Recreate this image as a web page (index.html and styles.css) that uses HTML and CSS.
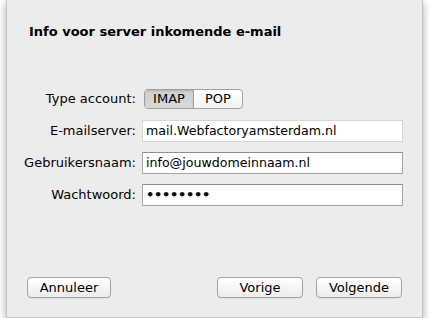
FILE: index.html
```html
<!DOCTYPE html>
<html>
<head>
<meta charset="utf-8">
<link rel="stylesheet" href="styles.css">
</head>
<body>
<div class="sheet">
  <h1 class="title">Info voor server inkomende e-mail</h1>
  <div class="form">
    <div class="label">Type account:</div>
    <div class="seg">
      <span class="seg-item selected">IMAP</span>
      <span class="seg-item">POP</span>
    </div>
    <div class="label">E-mailserver:</div>
    <div class="field">mail.Webfactoryamsterdam.nl</div>
    <div class="label">Gebruikersnaam:</div>
    <div class="field dark">info@jouwdomeinnaam.nl</div>
    <div class="label">Wachtwoord:</div>
    <div class="field dark dots">&#8226;&#8226;&#8226;&#8226;&#8226;&#8226;&#8226;&#8226;</div>
  </div>
  <div class="buttons">
    <button class="btn cancel">Annuleer</button>
    <div class="right">
      <button class="btn">Vorige</button>
      <button class="btn">Volgende</button>
    </div>
  </div>
</div>
</body>
</html>
```
FILE: styles.css
```css
html, body {
  margin: 0;
  padding: 0;
  background: #ffffff;
}
body {
  font-family: "DejaVu Sans", "Liberation Sans", sans-serif;
  font-size: 13px;
  color: #000;
}
.sheet {
  margin-left: 6px;
  width: 415px;
  height: 317px;
  background: #ececec;
  border-left: 1px solid #c4c4c4;
  border-right: 1px solid #c4c4c4;
  border-bottom: 1px solid #c8c8c8;
  box-shadow: 0 3px 8px rgba(0,0,0,0.35);
  display: flex;
  flex-direction: column;
}
.title {
  margin: 24px 0 0 22px;
  font-size: 13px;
  font-weight: bold;
  line-height: 16px;
}
.form {
  margin-top: 48px;
  display: grid;
  grid-template-columns: 129px 261px;
  column-gap: 6px;
  row-gap: 10px;
  align-items: center;
}
.label {
  text-align: right;
  line-height: 22px;
}
.seg {
  display: flex;
  width: 99px;
  height: 20px;
  box-sizing: border-box;
  border: 1px solid #a0a0a0;
  border-radius: 4px;
  overflow: hidden;
  background: linear-gradient(#ffffff, #f3f3f3);
  margin: -1px 0 -1px 2px;
}
.seg-item {
  flex: 1;
  text-align: center;
  line-height: 18px;
}
.seg-item.selected {
  background: linear-gradient(#cfcfcf, #d9d9d9);
  border-right: 1px solid #a0a0a0;
  box-shadow: inset 0 1px 2px rgba(0,0,0,0.15);
}
.field {
  height: 22px;
  box-sizing: border-box;
  background: #fff;
  border: 1px solid #d6d6d6;
  padding-left: 3px;
  line-height: 20px;
  font-size: 12.6px;
}
.field.dark {
  border: 1px solid #a6a6a6;
  border-top-color: #8e8e8e;
}
.dots {
  font-size: 13px;
  font-weight: bold;
  letter-spacing: -0.3px;
}
.buttons {
  margin-top: auto;
  margin-bottom: 19px;
  display: flex;
  justify-content: space-between;
  padding: 0 20px 0 20px;
}
.right {
  display: flex;
  gap: 13px;
}
.btn {
  font-family: inherit;
  font-size: 13px;
  color: #000;
  height: 21px;
  width: 86px;
  padding: 0;
  border: 1px solid #a3a3a3;
  border-radius: 4px;
  background: linear-gradient(#ffffff, #ececec);
  box-shadow: 0 1px 0 rgba(0,0,0,0.05);
}
.btn.cancel {
  width: 84px;
}
```
